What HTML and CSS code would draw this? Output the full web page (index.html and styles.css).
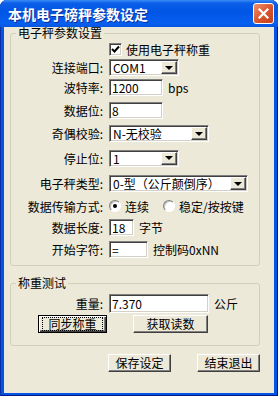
FILE: index.html
```html
<!DOCTYPE html>
<html lang="zh-CN">
<head>
  <meta charset="UTF-8">
  <title>本机电子磅秤参数设定</title>
  <link rel="stylesheet" href="styles.css">
</head>
<body>
  <div class="window">
    <div class="titlebar">
      <span class="title">本机电子磅秤参数设定</span>
      <button class="close-btn">
        <svg width="11" height="11" viewBox="0 0 11 11"><path d="M1.5 1.5 L9.5 9.5 M9.5 1.5 L1.5 9.5" stroke="#fff" stroke-width="2.2" stroke-linecap="square"/></svg>
      </button>
    </div>

    <div class="client">
      <!-- 电子秤参数 -->
      <fieldset class="group group-params">
        <legend>电子秤参数设置</legend>
        <div class="form">
          <span></span>
          <div class="opt"><span class="checkbox"><svg width="9" height="9" viewBox="0 0 9 9"><path d="M1 4 L3.5 6.5 L8 1.5" stroke="#000" stroke-width="2" fill="none"/></svg></span>使用电子秤称重</div>

          <span class="label">连接端口:</span>
          <div class="field"><div class="combo w70"><span class="combo-text">COM1</span><span class="drop"></span></div></div>

          <span class="label">波特率:</span>
          <div class="field"><div class="textbox w54">1200</div><span class="unit">bps</span></div>

          <span class="label">数据位:</span>
          <div class="field"><div class="textbox w54">8</div></div>

          <span class="label">奇偶校验:</span>
          <div class="field"><div class="combo w100"><span class="combo-text">N-无校验</span><span class="drop"></span></div></div>

          <span class="label">停止位:</span>
          <div class="field"><div class="combo w70"><span class="combo-text">1</span><span class="drop"></span></div></div>

          <span class="label">电子秤类型:</span>
          <div class="field"><div class="combo w139"><span class="combo-text">0-型（公斤颠倒序）</span><span class="drop"></span></div></div>

          <span class="label">数据传输方式:</span>
          <div class="field">
            <div class="opt"><span class="radio checked"></span>连续</div>
            <div class="opt opt-second"><span class="radio"></span>稳定/按按键</div>
          </div>

          <span class="label">数据长度:</span>
          <div class="field"><div class="textbox w25">18</div><span class="unit">字节</span></div>

          <span class="label">开始字符:</span>
          <div class="field"><div class="textbox w39">=</div><span class="unit">控制码0xNN</span></div>
        </div>
      </fieldset>

      <!-- 称重测试 -->
      <fieldset class="group group-test">
        <legend>称重测试</legend>
        <div class="form form-test">
          <span class="label">重量:</span>
          <div class="field"><div class="textbox w100 tall">7.370</div><span class="unit">公斤</span></div>
        </div>
        <div class="test-buttons">
          <button class="btn btn-default w69"><span class="focus">同步称重</span></button>
          <button class="btn w75">获取读数</button>
        </div>
      </fieldset>

      <div class="actions">
        <button class="btn w63">保存设定</button>
        <button class="btn w63">结束退出</button>
      </div>
    </div>
  </div>
</body>
</html>
```

FILE: styles.css
```css
body {
  margin: 0;
  background: #fff;
  font-family: "Noto Sans CJK SC", "Liberation Sans", sans-serif;
  font-size: 12px;
  color: #000;
}

.window {
  width: 278px;
  height: 396px;
  box-sizing: border-box;
  display: flex;
  flex-direction: column;
  background: #0553e2;
  border-radius: 7px 7px 0 0;
  box-shadow: inset 1px 0 #0831a8, inset -1px 0 #00138c, inset 0 -1px #001a8a;
}

.titlebar {
  height: 27px;
  flex-shrink: 0;
  display: flex;
  align-items: center;
  padding: 0 4px 0 8px;
  border-radius: 7px 7px 0 0;
  background: linear-gradient(to bottom, #3b8cf5 0%, #0a5ee8 12%, #0055e5 45%, #0860f0 85%, #0456e0 100%);
}

.title {
  color: #fff;
  font-weight: bold;
  font-size: 14px;
  line-height: 16px;
  text-shadow: 1px 1px #0b2e9c;
}

.close-btn {
  margin-left: auto;
  width: 21px;
  height: 21px;
  padding: 0;
  border: 1px solid #fff;
  border-radius: 3px;
  background: linear-gradient(135deg, #f0906c, #d8532b 55%, #c0401c);
  display: flex;
  justify-content: center;
  align-items: center;
}

.client {
  flex: 1;
  margin: 0 4px 3px 4px;
  background: #ece9d8;
  display: flex;
  flex-direction: column;
}

.group {
  margin: 0 14px 0 6px;
  padding: 0;
  border: 1px solid #d0d0bf;
  border-radius: 3px;
  min-width: 0;
}

.group legend {
  padding: 0 2px;
  margin-left: 5px;
  line-height: 12px;
}

.group-params {
  padding: 1px 0 5px;
}

.group-test {
  margin-top: 11px;
  padding: 4px 0 12px;
}

.form {
  display: grid;
  grid-template-columns: 92px 1fr;
  grid-template-rows: 18px 19px 21px 24px 23px 26px 25px 20px 22px 22px;
  column-gap: 6px;
  align-items: center;
}

.form-test {
  grid-template-rows: 20px;
}

.label {
  text-align: right;
  white-space: nowrap;
}

.field {
  display: flex;
  align-items: center;
}

.unit {
  margin-left: 5px;
}

.opt {
  display: flex;
  align-items: center;
  gap: 4px;
  white-space: nowrap;
}

.opt-second {
  margin-left: 14px;
}

.checkbox {
  width: 13px;
  height: 13px;
  box-sizing: border-box;
  background: #fff;
  border: 1px solid;
  border-color: #808080 #fff #fff #808080;
  box-shadow: inset 1px 1px #404040, inset -1px -1px #d4d0c8;
  display: flex;
  justify-content: center;
  align-items: center;
}

.radio {
  width: 12px;
  height: 12px;
  box-sizing: border-box;
  border-radius: 50%;
  background: #fff;
  border: 1px solid;
  border-color: #808080 #fff #fff #808080;
  box-shadow: inset 1px 1px #c0c0c0;
  display: flex;
  justify-content: center;
  align-items: center;
}

.radio.checked::after {
  content: "";
  width: 4px;
  height: 4px;
  border-radius: 50%;
  background: #000;
}

.textbox, .combo {
  height: 17px;
  box-sizing: border-box;
  background: #fff;
  border: 1px solid;
  border-color: #808080 #fff #fff #808080;
  box-shadow: inset 1px 1px #404040, inset -1px -1px #d4d0c8;
  display: flex;
  align-items: center;
  line-height: 13px;
  white-space: nowrap;
}

.textbox {
  padding-left: 2px;
}

.textbox.tall {
  height: 19px;
}

.combo {
  padding: 1px;
}

.combo-text {
  flex: 1;
  padding-left: 2px;
}

.drop {
  width: 16px;
  height: 100%;
  flex-shrink: 0;
  box-sizing: border-box;
  background: #ece9d8;
  border: 1px solid;
  border-color: #fff #404040 #404040 #fff;
  box-shadow: inset -1px -1px #808080;
  display: flex;
  justify-content: center;
  align-items: center;
}

.drop::after {
  content: "";
  border-left: 4px solid transparent;
  border-right: 4px solid transparent;
  border-top: 4px solid #000;
}

.w25 { width: 25px; }
.w39 { width: 39px; }
.w54 { width: 54px; }
.w63 { width: 63px; }
.w69 { width: 69px; }
.w70 { width: 70px; }
.w75 { width: 75px; }
.w100 { width: 100px; }
.w139 { width: 139px; }

.test-buttons {
  display: flex;
  gap: 26px;
  margin-top: 2px;
  padding-left: 27px;
}

.btn {
  height: 18px;
  padding: 0;
  box-sizing: border-box;
  font-family: inherit;
  font-size: 12px;
  line-height: 12px;
  color: #000;
  background: #ece9d8;
  border: 1px solid;
  border-color: #fff #404040 #404040 #fff;
  box-shadow: inset -1px -1px #808080;
  display: flex;
  justify-content: center;
  align-items: center;
}

.btn-default {
  border-color: #000;
  box-shadow: inset 1px 1px #fff, inset -1px -1px #404040, inset -2px -2px #808080;
}

.btn .focus {
  flex: 1;
  margin: 0 3px;
  height: 12px;
  border: 1px dotted #000;
  display: flex;
  justify-content: center;
  align-items: center;
}

.actions {
  display: flex;
  justify-content: flex-end;
  gap: 26px;
  margin: 8px 14px 0 0;
}
```
